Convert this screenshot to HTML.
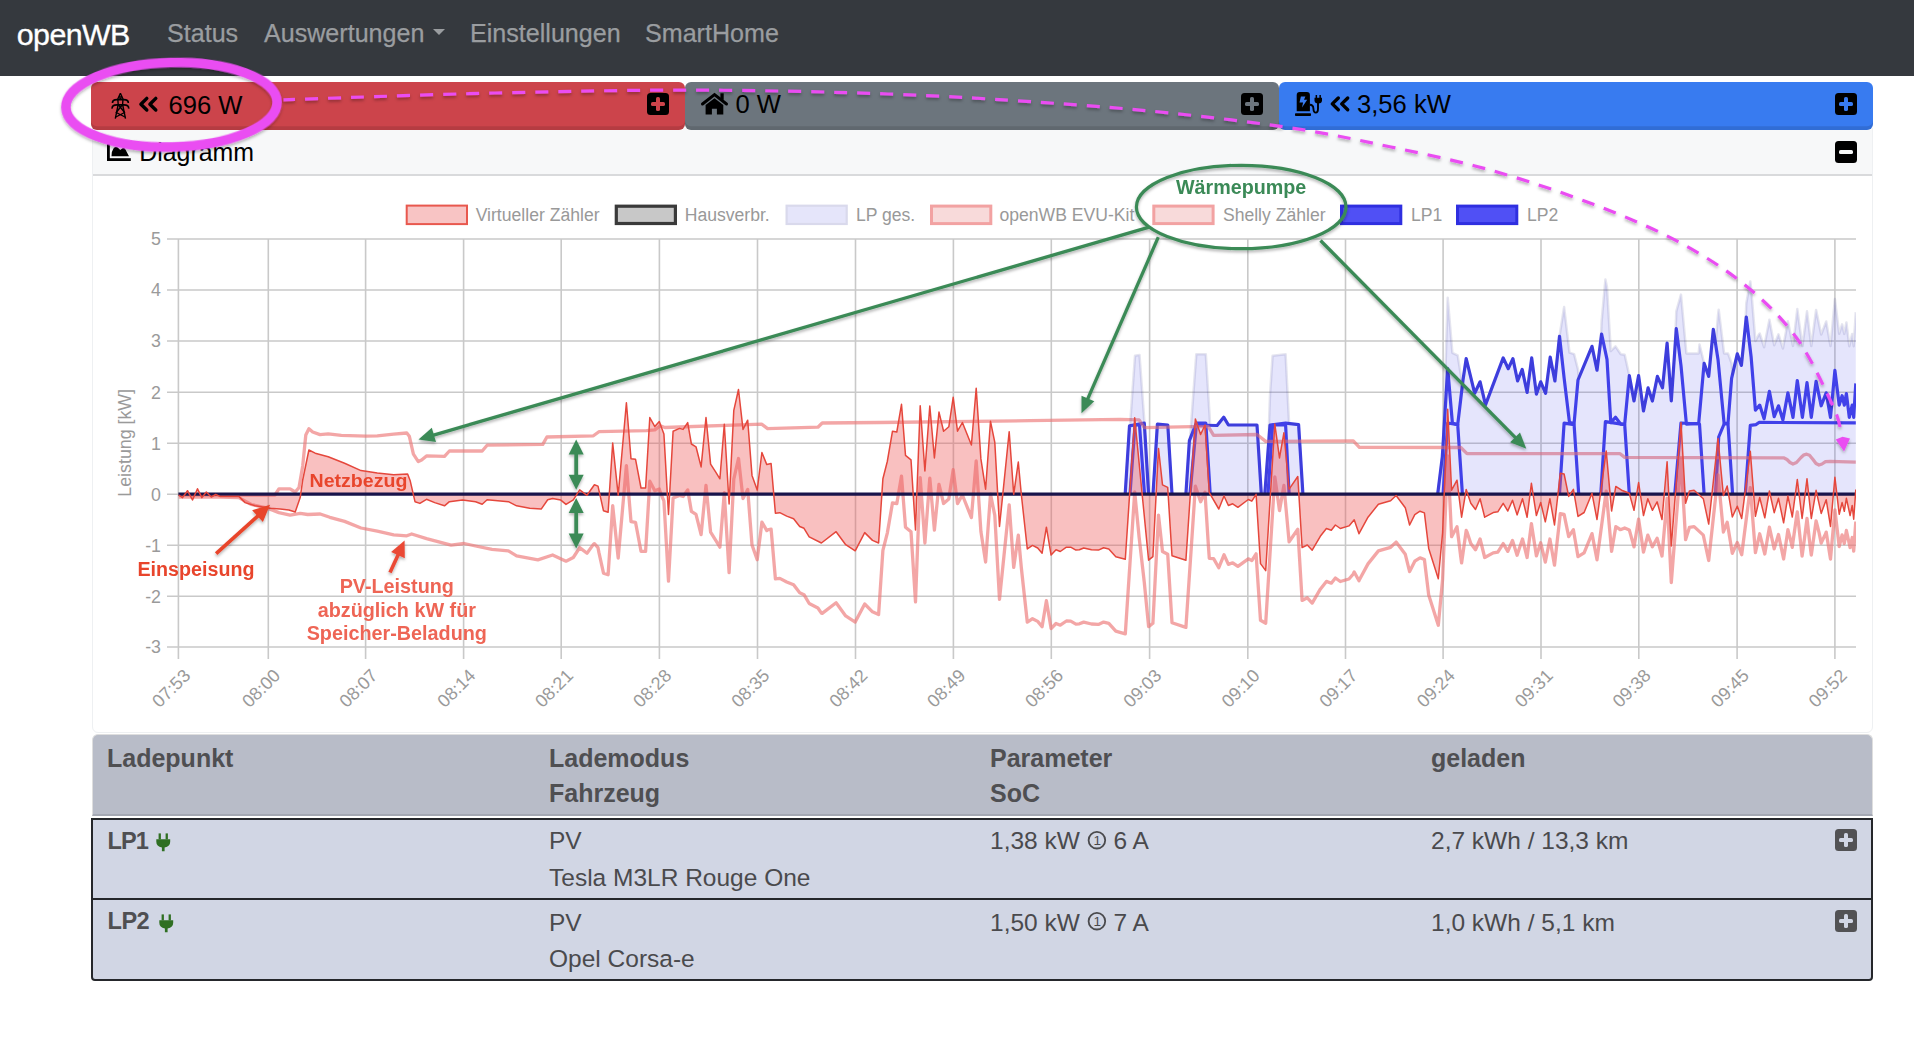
<!DOCTYPE html>
<html><head><meta charset="utf-8">
<style>
*{box-sizing:border-box;margin:0;padding:0}
html,body{width:1914px;height:1038px;overflow:hidden;background:#fff;font-family:"Liberation Sans",sans-serif;position:relative}
.a{position:absolute;white-space:pre;line-height:1}
#nav{position:absolute;left:0;top:0;width:1914px;height:76px;background:#35393e}
.brand{color:#fff;font-size:30.4px;letter-spacing:-0.6px;-webkit-text-stroke:0.35px #fff}
.nl{color:#9a9da0;font-size:25.1px;-webkit-text-stroke:0.25px #9a9da0}
.card{position:absolute;top:82px;height:48px;border-radius:6px;box-shadow:inset 0 -3.8px 0 rgba(0,0,0,.11)}
.ctext{font-size:25.3px;color:#000}
.pbox{position:absolute;width:22px;height:22px;background:#000;border-radius:3.5px}
.pbox:before{content:"";position:absolute;left:4.2px;top:9.35px;width:13.6px;height:3.3px;border-radius:1.6px;background:var(--c)}
.pbox.plus:after{content:"";position:absolute;left:9.35px;top:4.2px;width:3.3px;height:13.6px;border-radius:1.6px;background:var(--c)}
#dcard{position:absolute;left:91.5px;top:124px;width:1781.5px;height:609px;border:1.2px solid #eef0f2;border-radius:6px;background:#fff}
#dhead{position:absolute;left:0;top:0;width:100%;height:51px;background:#f7f8f9;border-bottom:2px solid #d9dadc;border-radius:6px 6px 0 0}
.th{font-size:25px;font-weight:bold;color:#4f4f52}
.td{font-size:24.5px;color:#4a4a4d}
</style></head><body>
<div id="nav"></div>
<div class="a brand" style="left:16.8px;top:18.9px">openWB</div>
<div class="a nl" style="left:167px;top:21px">Status</div>
<div class="a nl" style="left:264px;top:21px">Auswertungen</div>
<div class="a" style="left:433px;top:28.6px;width:0;height:0;border-left:6.4px solid transparent;border-right:6.4px solid transparent;border-top:6.8px solid #9a9da0"></div>
<div class="a nl" style="left:470px;top:21px">Einstellungen</div>
<div class="a nl" style="left:645px;top:21px">SmartHome</div>

<div id="dcard"><div id="dhead"></div></div>

<div class="card" style="left:91px;width:594px;background:#cc444b"></div>
<div class="card" style="left:685px;width:594px;background:#6c757d"></div>
<div class="card" style="left:1279px;width:594px;background:#387bf0"></div>
<div class="pbox plus" style="left:647px;top:93px;--c:#cc444b"></div>
<div class="pbox plus" style="left:1241px;top:93px;--c:#6c757d"></div>
<div class="pbox plus" style="left:1835px;top:93px;--c:#387bf0"></div>
<div class="pbox" style="left:1835px;top:141px;--c:#f7f8f9"></div>

<div class="a ctext" style="left:168.5px;top:92.6px;font-size:25.6px">696 W</div>
<div class="a ctext" style="left:735.5px;top:92.2px;font-size:25.6px">0 W</div>
<div class="a ctext" style="left:1357px;top:92.2px;font-size:25.6px">3,56 kW</div>
<div class="a" style="left:139.2px;top:140.1px;font-size:24.9px;color:#000">Diagramm</div>

<!-- table -->
<div class="a" style="left:91.5px;top:734.2px;width:1781.5px;height:81.8px;background:#b8bcc8;border:1.6px solid #dedede;border-bottom:2px solid #a5a9b4;border-radius:6px 6px 0 0"></div>
<div class="a" style="left:91px;top:818px;width:1782px;height:163px;background:#d1d6e4;border:2px solid #25272b;border-radius:0 0 4px 4px"></div>
<div class="a" style="left:93px;top:898px;width:1778px;height:2px;background:#25272b"></div>
<div class="a th" style="left:107px;top:745.6px">Ladepunkt</div>
<div class="a th" style="left:549px;top:745.6px">Lademodus</div>
<div class="a th" style="left:549px;top:780.6px">Fahrzeug</div>
<div class="a th" style="left:990px;top:745.6px">Parameter</div>
<div class="a th" style="left:990px;top:780.6px">SoC</div>
<div class="a th" style="left:1431px;top:745.6px">geladen</div>
<div class="a th" style="left:107.6px;top:830.1px;font-size:23.6px;letter-spacing:-1px">LP1</div>
<div class="a th" style="left:107.6px;top:910.4px;font-size:23.6px;letter-spacing:-0.6px">LP2</div>
<div class="a td" style="left:549px;top:829.1px">PV</div>
<div class="a td" style="left:549px;top:865.8px">Tesla M3LR Rouge One</div>
<div class="a td" style="left:549px;top:910.5px">PV</div>
<div class="a td" style="left:549px;top:946.6px">Opel Corsa-e</div>
<div class="a td" style="left:990px;top:829.1px">1,38 kW <span style="display:inline-block;width:20px"></span> 6 A</div>
<div class="a td" style="left:990px;top:910.5px">1,50 kW <span style="display:inline-block;width:20px"></span> 7 A</div>
<div class="a td" style="left:1431px;top:829.1px">2,7 kWh / 13,3 km</div>
<div class="a td" style="left:1431px;top:910.5px">1,0 kWh / 5,1 km</div>
<div class="pbox plus" style="left:1835px;top:829px;--c:#d1d6e4;background:#525254"></div>
<div class="pbox plus" style="left:1835px;top:910px;--c:#d1d6e4;background:#525254"></div>


<svg class="a" style="left:0;top:0" width="1914" height="1038" viewBox="0 0 1914 1038">
<g fill="none" stroke="#000" stroke-width="1.4" stroke-linejoin="round">
<path d="M120.4,93.2 L117.8,99 L118.2,104.5 L115.3,118.6 M120.4,93.2 L123,99 L122.6,104.5 L125.5,118.6 M118.4,97 H122.4"/>
<path d="M112.5,103 C112.4,100.6 113.8,99.8 117,99.7 H123.8 C127,99.8 128.4,100.6 128.3,103" stroke-width="1.7"/>
<path d="M112.1,108.6 C112,106 113.6,105 117,104.9 H123.8 C127.2,105 128.8,106 128.7,108.6" stroke-width="1.7"/>
<path d="M118.2,104.5 L124.6,112.5 L115.8,117 M122.6,104.5 L116.2,112.5 L125,117 M119.3,98.5 L121.6,98.5"/>
</g>
<g fill="none" stroke="#000" stroke-width="3.4" stroke-linecap="round" stroke-linejoin="round">
<path d="M146.8,98.4 L140.9,104.3 L146.8,110 M155.8,98.4 L149.9,104.3 L155.8,110"/>
<path d="M1338.3,98 L1332.3,103.9 L1338.3,109.8 M1347.7,98 L1341.7,103.9 L1347.7,109.8"/>
</g>
<path d="M702.5,104 L714.5,94.6 L726.5,104" fill="none" stroke="#000" stroke-width="3" stroke-linecap="round" stroke-linejoin="miter"/>
<rect x="720.4" y="93.3" width="3.3" height="6.5" fill="#000"/>
<path d="M705.6,105 L714.5,98.2 L723.3,105 V114.4 H716.9 V108.8 H711.9 V114.4 H705.6 Z" fill="#000"/>
<path d="M1296.7,95.1 Q1296.7,92.1 1299.7,92.1 H1306.9 Q1309.9,92.1 1309.9,95.1 V111.2 H1296.7 Z" fill="#000"/>
<path d="M1300.9,96.6 H1305.4 L1304,99.8 H1307.2 L1302,107.4 L1303.1,102.6 H1299.5 Z" fill="#387bf0"/>
<rect x="1295" y="113.2" width="16" height="2.8" rx="0.8" fill="#000"/>
<path d="M1309.9,104.8 Q1313.2,104.8 1313.4,108.5 Q1313.6,112.6 1315.8,112.6 Q1318,112.6 1318,108.5 V102" fill="none" stroke="#000" stroke-width="1.9"/>
<path d="M1314.5,97.8 H1322 V100.2 Q1322,103.4 1318.3,103.4 Q1314.5,103.4 1314.5,100.2 Z" fill="#000"/>
<rect x="1315.6" y="95" width="1.5" height="3.5" fill="#000"/><rect x="1319.4" y="95" width="1.5" height="3.5" fill="#000"/>
<rect x="107" y="144" width="2.8" height="17" fill="#000"/><rect x="107" y="158.2" width="23.8" height="2.8" fill="#000"/>
<path d="M111.5,156.2 Q111.5,151 113.5,148.5 Q115.4,145.8 117.4,147.2 L120.3,150.1 L122.8,148.1 Q124.3,147.4 125.3,149.2 L129,156.2 Z" fill="#000"/>
<g fill="#2f6f22">
<path d="M156.3,839.2 H170.2 V841.8 Q170.2,846.6 164.6,847.4 V851.3 H161.9 V847.4 Q156.3,846.6 156.3,841.8 Z"/>
<rect x="158.6" y="833.4" width="2.3" height="6"/><rect x="165.6" y="833.4" width="2.3" height="6"/>
<path d="M159.3,920.2 H173.2 V922.8 Q173.2,927.6 167.6,928.4 V932.3 H164.9 V928.4 Q159.3,927.6 159.3,922.8 Z"/>
<rect x="161.6" y="914.4" width="2.3" height="6"/><rect x="168.6" y="914.4" width="2.3" height="6"/>
</g>
<g fill="none" stroke="#4a4a4d" stroke-width="1.8"><circle cx="1096.9" cy="840.2" r="8.3"/><circle cx="1096.9" cy="921.2" r="8.3"/></g>
<g fill="#4a4a4d" font-size="13.5"><text x="1097.2" y="845.1" text-anchor="middle">1</text><text x="1097.2" y="926.1" text-anchor="middle">1</text></g>
</svg>
<svg class="a" style="left:0;top:0" width="1914" height="1038" viewBox="0 0 1914 1038">
<defs><clipPath id="pc"><rect x="178" y="200" width="1678" height="460"/></clipPath><filter id="sh" x="-10%" y="-10%" width="120%" height="130%"><feDropShadow dx="0" dy="2" stdDeviation="1.6" flood-color="#000" flood-opacity="0.35"/></filter></defs>
<path d="M167,239 H1856 M167,290 H1856 M167,341 H1856 M167,392.2 H1856 M167,443.3 H1856 M167,494.2 H1856 M167,545.3 H1856 M167,596.3 H1856 M167,647 H1856 M178.4,239 V659 M268.3,239 V659 M365.6,239 V659 M463.6,239 V659 M561.2,239 V659 M659.4,239 V659 M757.5,239 V659 M855.5,239 V659 M953.4,239 V659 M1051.3,239 V659 M1149.6,239 V659 M1247.8,239 V659 M1345.5,239 V659 M1443.1,239 V659 M1541,239 V659 M1638.8,239 V659 M1737.1,239 V659 M1834.9,239 V659" stroke="#c9c9c9" stroke-width="1.6" fill="none"/>
<text x="161" y="245.4" text-anchor="end" font-size="17.8" fill="#9a9a9a">5</text>
<text x="161" y="296.4" text-anchor="end" font-size="17.8" fill="#9a9a9a">4</text>
<text x="161" y="347.4" text-anchor="end" font-size="17.8" fill="#9a9a9a">3</text>
<text x="161" y="398.6" text-anchor="end" font-size="17.8" fill="#9a9a9a">2</text>
<text x="161" y="449.7" text-anchor="end" font-size="17.8" fill="#9a9a9a">1</text>
<text x="161" y="500.6" text-anchor="end" font-size="17.8" fill="#9a9a9a">0</text>
<text x="161" y="551.7" text-anchor="end" font-size="17.8" fill="#9a9a9a">-1</text>
<text x="161" y="602.7" text-anchor="end" font-size="17.8" fill="#9a9a9a">-2</text>
<text x="161" y="653.4" text-anchor="end" font-size="17.8" fill="#9a9a9a">-3</text>
<text transform="translate(187,672.3) rotate(-45)" x="0" y="6.3" text-anchor="end" font-size="18" fill="#9a9a9a">07:53</text>
<text transform="translate(276.9,672.3) rotate(-45)" x="0" y="6.3" text-anchor="end" font-size="18" fill="#9a9a9a">08:00</text>
<text transform="translate(374.2,672.3) rotate(-45)" x="0" y="6.3" text-anchor="end" font-size="18" fill="#9a9a9a">08:07</text>
<text transform="translate(472.2,672.3) rotate(-45)" x="0" y="6.3" text-anchor="end" font-size="18" fill="#9a9a9a">08:14</text>
<text transform="translate(569.8,672.3) rotate(-45)" x="0" y="6.3" text-anchor="end" font-size="18" fill="#9a9a9a">08:21</text>
<text transform="translate(668,672.3) rotate(-45)" x="0" y="6.3" text-anchor="end" font-size="18" fill="#9a9a9a">08:28</text>
<text transform="translate(766.1,672.3) rotate(-45)" x="0" y="6.3" text-anchor="end" font-size="18" fill="#9a9a9a">08:35</text>
<text transform="translate(864.1,672.3) rotate(-45)" x="0" y="6.3" text-anchor="end" font-size="18" fill="#9a9a9a">08:42</text>
<text transform="translate(962,672.3) rotate(-45)" x="0" y="6.3" text-anchor="end" font-size="18" fill="#9a9a9a">08:49</text>
<text transform="translate(1059.9,672.3) rotate(-45)" x="0" y="6.3" text-anchor="end" font-size="18" fill="#9a9a9a">08:56</text>
<text transform="translate(1158.2,672.3) rotate(-45)" x="0" y="6.3" text-anchor="end" font-size="18" fill="#9a9a9a">09:03</text>
<text transform="translate(1256.4,672.3) rotate(-45)" x="0" y="6.3" text-anchor="end" font-size="18" fill="#9a9a9a">09:10</text>
<text transform="translate(1354.1,672.3) rotate(-45)" x="0" y="6.3" text-anchor="end" font-size="18" fill="#9a9a9a">09:17</text>
<text transform="translate(1451.7,672.3) rotate(-45)" x="0" y="6.3" text-anchor="end" font-size="18" fill="#9a9a9a">09:24</text>
<text transform="translate(1549.6,672.3) rotate(-45)" x="0" y="6.3" text-anchor="end" font-size="18" fill="#9a9a9a">09:31</text>
<text transform="translate(1647.4,672.3) rotate(-45)" x="0" y="6.3" text-anchor="end" font-size="18" fill="#9a9a9a">09:38</text>
<text transform="translate(1745.7,672.3) rotate(-45)" x="0" y="6.3" text-anchor="end" font-size="18" fill="#9a9a9a">09:45</text>
<text transform="translate(1843.5,672.3) rotate(-45)" x="0" y="6.3" text-anchor="end" font-size="18" fill="#9a9a9a">09:52</text>
<text transform="translate(131,442.8) rotate(-90)" x="0" y="0" text-anchor="middle" font-size="17.8" fill="#9a9a9a">Leistung [kW]</text>
<g clip-path="url(#pc)">
<polyline points="1130,494 1135,425 1139.5,425 1144.5,494" fill="none" stroke="#4141e9" stroke-width="3.2" stroke-linejoin="round"/>
<polyline points="1190,494 1196.3,425 1217.1,425.5 1223.7,417.2 1228.4,425 1257,425 1261.3,494" fill="none" stroke="#4141e9" stroke-width="3.2" stroke-linejoin="round"/>
<polyline points="1268,494 1272.6,425 1285.6,425 1289.1,494" fill="none" stroke="#4141e9" stroke-width="3.2" stroke-linejoin="round"/>
<polyline points="1443.1,494 1447.7,423 1457.7,424.7 1462.4,494" fill="none" stroke="#4141e9" stroke-width="3.2" stroke-linejoin="round"/>
<polyline points="1559.5,494 1564.1,423.2 1574.1,424.7 1578.7,494" fill="none" stroke="#4141e9" stroke-width="3.2" stroke-linejoin="round"/>
<polyline points="1600.8,494 1605.4,421.6 1624.7,424.7 1629.3,494" fill="none" stroke="#4141e9" stroke-width="3.2" stroke-linejoin="round"/>
<polyline points="1674.8,494 1681,423 1699.5,424 1704.1,494" fill="none" stroke="#4141e9" stroke-width="3.2" stroke-linejoin="round"/>
<polyline points="1715.6,494 1718.7,437 1724.1,424 1728,424 1732.6,494" fill="none" stroke="#4141e9" stroke-width="3.2" stroke-linejoin="round"/>
<polyline points="1745.3,494 1750.3,425.3 1756.1,424.6 1759,422.4 1855.8,422.8" fill="none" stroke="#4141e9" stroke-width="3.2" stroke-linejoin="round"/>
<polyline points="1125.2,494 1129.5,425.8 1144.3,423.2 1148.6,494" fill="none" stroke="#4141e9" stroke-width="3.2" stroke-linejoin="round"/>
<polyline points="1153,494 1157.4,424.1 1167.8,425 1172,494" fill="none" stroke="#4141e9" stroke-width="3.2" stroke-linejoin="round"/>
<polyline points="1185.9,494 1189.4,440.6 1196.3,423.2 1205.8,423 1210.2,494" fill="none" stroke="#4141e9" stroke-width="3.2" stroke-linejoin="round"/>
<polyline points="1264.8,494 1270,425 1285.6,423.2 1298.6,424.6 1302.9,494" fill="none" stroke="#4141e9" stroke-width="3.2" stroke-linejoin="round"/>
<polyline points="1437.7,494 1442.3,457 1447.7,368.7 1452.4,423 1457.7,424.7 1463,380 1466.2,358.6 1474.7,393.3 1480.1,381.8 1485.5,404.9 1503.2,357.9 1508.3,368.7 1512.9,358.6 1517.6,381 1522.2,369.4 1527.1,392.5 1531.7,357.9 1536.4,394.1 1540.7,381.8 1545.6,393.3 1550.2,357.1 1554.9,381 1559.5,336.3 1564.1,377.9 1569.5,422.6 1574.1,423.4 1578,380 1592,346.3 1597,370.2 1601.6,334 1607,359.4 1610.8,422.6 1615.5,417.2 1620.8,424.1 1624.7,424.1 1629.3,375.6 1634,401 1638.6,375.6 1643.5,411 1648.1,387.9 1652.4,401 1657.4,376.4 1662.5,387.9 1667.1,343.2 1671.3,401 1676.3,328.6 1681,365.6 1686.4,424.1 1698.7,423.4 1704.1,363.3 1708.7,376.4 1713.3,329.3 1718,359.4 1724.1,423.4 1728,423.4 1731.6,378.4 1737.3,353.8 1741.4,365.4 1746.3,317 1751.1,356.7 1755.4,410.2 1759.7,405.1 1764.1,418.8 1769.4,391.4 1774.2,416.7 1778.5,405.8 1782.9,420 1787.9,392.8 1793,417.4 1797.3,380.5 1802.4,417.4 1807,382.7 1811.3,417.4 1816.1,381.3 1821.2,405.8 1826.2,392.8 1830.5,417.4 1834.9,370.4 1839.2,405.1 1842.1,395.7 1844.3,405.1 1846.4,393.6 1849.3,417.4 1852.2,405.1 1853.7,417.4 1855.8,383.4" fill="none" stroke="#4141e9" stroke-width="3.2" stroke-linejoin="round"/>
<polyline points="178.7,495 275,495 278.9,488.8 290.1,488.8 295.2,492 299,487.6 302.7,466 305.8,435 308.9,428.8 312.7,432 320,434.6 328.2,433.8 341.3,435.4 365.9,436.2 377.3,435.9 393.7,434.2 406.8,433 409.3,436.2 413.4,454.2 418.3,461.6 421.6,460 426.5,455.9 444.5,456.4 449.4,451 482.2,451 487.1,445.2 542.8,444.4 546.9,437 593.4,435.8 598.9,431.7 646.5,430.6 654.8,429.9 660.3,425.7 664.8,427.5 761.6,424.2 767.6,428.6 817.9,427.2 822.2,423 880,422.5 1030,420.7 1120,419.4 1139.1,419.8 1144.3,427.6 1192.8,426.7 1208.4,426.7 1213.6,435.4 1257,434.5 1265.7,441.4 1353.3,440.9 1359.4,447.3 1460.8,447.5 1467,453.7 1620.1,453.7 1624.7,457.4 1783.6,457.8 1787,459.5 1790,462.5 1793,464 1796.5,462.5 1801,457.5 1804,454.8 1806.7,454.2 1809.5,455.2 1813,459.5 1816,463.5 1819,465 1822,464 1825.5,461.6 1830,461.4 1855.8,462.1" fill="none" stroke="rgba(236,115,115,0.64)" stroke-width="3.3" stroke-linejoin="round"/>
<polyline points="178.7,497 220,497 238.8,497.6 251.3,504.5 267.6,508.2 278.9,512.6 290.1,515.1 300.2,513.3 307.7,514.5 320.2,514 329.8,517.3 344.6,521.4 361,528 377.3,531.2 393.7,534.8 406.8,535.8 411.7,534 426.5,538.6 451.1,545.2 464.2,543.5 475.6,546 492,549.3 508.4,550.9 516.6,555.8 537.9,559.9 552.6,555 566,561.2 573.3,557.5 579.7,547.6 587,553.3 593.4,544.4 594.4,543.7 598,547.7 598.9,552.4 603.5,573.2 608.1,574.8 612.7,505.7 618.2,558 626.4,465.7 631,521.7 635.5,522.3 641,551.3 645.6,551.4 646.5,536.3 649.8,481.2 654.8,490.7 659.3,489 660.3,492.5 663.9,500.8 664.8,516.2 668.5,581.1 673.1,498 679.5,495.4 683.1,496.5 687.7,489.9 691.4,511.4 696,514.4 701.1,534.6 706,485.4 710.6,532.2 715.6,540.1 719.9,547.2 724.3,492.7 729.1,572.7 733.8,479.2 738.5,458.5 743,498.6 747.7,489.5 752,544.9 757.2,559.8 761.6,524.7 761.9,522.1 766.8,530.6 767.6,529.8 771.1,529.1 775.4,578.8 779.8,578.4 786.7,582 793.6,584.8 799.7,592.8 804,594.7 809.2,603.5 817.9,608 821.4,613.2 822.2,613.4 836.1,602.8 845.7,615.9 855.2,622.1 864.7,604 872.5,611.8 878.6,614.5 880,593.6 882.9,550.3 887.3,533.1 892.5,502.8 896.8,503.7 901.5,476.1 905.5,527.2 911,531.7 915.5,601.9 920.2,477.7 924.9,543 929.8,478.1 934.4,530.2 939,484.3 943.6,503.5 948.8,499.1 953.2,469.7 957.5,503.6 962.4,495 971.4,517.6 976.2,461 980.9,531.6 985.6,562 990.5,494.1 994.8,515.3 999.5,599.4 1009.2,504.8 1013.7,567.4 1018.3,535.2 1021.3,567.5 1027.3,622.2 1030,620.4 1032.5,618.7 1037.7,621.4 1042.1,626.7 1046.4,600.7 1051.1,628.6 1056,623.5 1060.3,625.2 1066.4,621 1070.7,621.1 1075.9,624.1 1079.4,623.8 1083.7,622.1 1091.5,624 1098.4,624.4 1103.6,622.1 1108.8,623.3 1115.8,631.2 1120,632.4 1125.3,633.8 1134.7,492 1139.1,537 1144.3,582.5 1148.6,626.7 1152.9,623.3 1158.5,515.1 1162.5,551.5 1167.7,554.2 1172,622.7 1185.9,627.4 1192.8,524.9 1195.4,486.2 1200.6,501.8 1205,492.3 1208.4,545.8 1209.3,558.4 1213.6,558.6 1218.8,567.7 1224,554.8 1228.4,564.4 1232.7,562.8 1237.9,566.4 1248.3,558.8 1251.8,560.6 1256.1,553.8 1257,568 1260.5,620.3 1265.7,623.2 1274.8,476.8 1279.5,510.6 1283.9,485.5 1289.1,541.8 1297.8,529.3 1302.1,600.4 1307.3,597.8 1312.2,603.1 1320.3,589.2 1326.4,581.4 1331.3,583.2 1335.4,578 1340.3,581.5 1349,579 1353.3,574 1354.2,572 1359,580.8 1359.4,579.7 1368,563.9 1378.4,550.9 1390.6,547.3 1396.1,542.1 1405.3,554.3 1409.6,571.6 1414.8,561.2 1420,557.8 1424.4,559.5 1428.7,595 1438.3,625.3 1442.6,579.3 1447.7,455.8 1451.6,536.7 1457,526.7 1460.8,557.3 1461.6,562.9 1466.2,530.5 1467,532.1 1470.8,543.6 1475.5,549.8 1480.1,539 1484.7,557.5 1493.2,552.9 1497.8,552.1 1503.2,543.6 1507.8,551.3 1512.5,540.5 1517.1,555.2 1522.5,539 1527.1,557.5 1531.4,523.6 1536.4,555.9 1540.7,542.8 1545.3,562.1 1549.9,539 1554.5,565.2 1560.3,513.6 1564.1,514.3 1568.7,536.7 1573.4,529.7 1578,556.7 1584.1,552.8 1592,533.6 1597,559.8 1606.2,491.2 1611.6,551.3 1615.8,526.7 1620.1,529.5 1621.6,529.3 1624.7,528 1629.3,529.9 1634,546.9 1638.6,519.1 1643.5,552.2 1647.8,535.2 1652.4,546.8 1657.1,538.3 1662,556 1667.1,498.2 1671.3,582.5 1681,458.9 1685.6,539.7 1689.4,527.4 1694.1,526.6 1703.3,535.1 1708.7,560.5 1718,475 1723.4,532 1727.2,522.3 1732.3,553.3 1737.3,542.5 1741.7,554.8 1750.3,487.6 1755.4,552.6 1759.7,533.8 1764.8,554 1769.4,527.2 1774.2,548.9 1778.5,534.5 1783.6,559 1787,536.2 1787.9,529.7 1790,537.6 1792.3,547.4 1793,541.7 1796.5,517 1797.3,511.9 1801,546.1 1802.1,556 1804,542.3 1806.7,521 1807,518.5 1809.5,540.7 1811.3,555.1 1813,543 1816,521.4 1816.1,520.8 1819,532.4 1821.2,543.1 1822,541.2 1825.5,534 1826.2,532.1 1830,555.9 1830.5,559 1834.9,509.8 1839.2,546.6 1842.1,534.9 1844.3,543.5 1846.4,530.5 1850.1,547.7 1852.2,537.5 1853.7,551.2 1855.8,521.5" fill="none" stroke="rgba(236,115,115,0.64)" stroke-width="3.3" stroke-linejoin="round"/>
<polygon points="1125.2,494 1125.2,494 1129.5,425.8 1130,425.7 1135,355.8 1139.5,355 1144.3,420.4 1144.5,426.5 1148.6,494 1153,494 1157.4,424.1 1167.8,425 1172,494 1185.9,494 1189.4,440.6 1190,439.1 1196.3,354.2 1205.8,354.2 1210.2,425.3 1217.1,425.5 1223.7,417.2 1228.4,425 1257,425 1261.3,494 1264.8,494 1268,451.5 1270,395 1272.6,355.7 1285.6,354.2 1289.1,423.6 1298.6,424.6 1302.9,494 1302.9,494" fill="rgba(70,70,235,0.14)" stroke="none"/>
<polyline points="1125.2,494 1129.5,425.8 1130,425.7 1135,355.8 1139.5,355 1144.3,420.4 1144.5,426.5 1148.6,494 1153,494 1157.4,424.1 1167.8,425 1172,494 1185.9,494 1189.4,440.6 1190,439.1 1196.3,354.2 1205.8,354.2 1210.2,425.3 1217.1,425.5 1223.7,417.2 1228.4,425 1257,425 1261.3,494 1264.8,494 1268,451.5 1270,395 1272.6,355.7 1285.6,354.2 1289.1,423.6 1298.6,424.6 1302.9,494" fill="none" stroke="rgba(40,40,120,0.12)" stroke-width="2.5" stroke-linejoin="round"/>
<polygon points="1437.7,494 1437.7,494 1442.3,457 1443.1,443.9 1447.7,297.7 1452.4,352.8 1457.7,355.4 1462.4,385.1 1463,380 1466.2,358.6 1474.7,393.3 1480.1,381.8 1485.5,404.9 1503.2,357.9 1508.3,368.7 1512.9,358.6 1517.6,381 1522.2,369.4 1527.1,392.5 1531.7,357.9 1536.4,394.1 1540.7,381.8 1545.6,393.3 1550.2,357.1 1554.9,381 1559.5,336.3 1564.1,307.1 1569.5,352.6 1574.1,354.1 1578,369.5 1578.7,378.3 1592,346.3 1597,370.2 1600.8,340.3 1601.6,321.4 1605.4,279.5 1607,287.3 1610.8,351.1 1615.5,346.4 1620.8,354.2 1624.7,354.8 1629.3,375.6 1634,401 1638.6,375.6 1643.5,411 1648.1,387.9 1652.4,401 1657.4,376.4 1662.5,387.9 1667.1,343.2 1671.3,401 1674.8,350.3 1676.3,311.4 1681,294.6 1686.4,353.4 1698.7,353.4 1699.5,344.5 1704.1,363.3 1708.7,376.4 1713.3,329.3 1715.6,344 1718,315.3 1718.7,309.7 1724.1,353.4 1728,353.4 1731.6,363.2 1732.6,374.1 1737.3,353.8 1741.4,365.4 1745.3,326.9 1746.3,303.3 1750.3,281.4 1751.1,287.9 1755.4,340.9 1756.1,340 1759,334.3 1759.7,333.5 1764.1,347.2 1769.4,319.8 1774.2,345.2 1778.5,334.3 1782.9,348.5 1787.9,321.3 1793,345.9 1797.3,309.1 1802.4,346 1807,311.3 1811.3,346 1816.1,309.9 1821.2,334.5 1826.2,321.5 1830.5,346.1 1834.9,299.1 1839.2,333.8 1842.1,324.4 1844.3,333.9 1846.4,322.4 1849.3,346.2 1852.2,333.9 1853.7,346.2 1855.8,312.2 1855.8,494" fill="rgba(70,70,235,0.14)" stroke="none"/>
<polyline points="1437.7,494 1442.3,457 1443.1,443.9 1447.7,297.7 1452.4,352.8 1457.7,355.4 1462.4,385.1 1463,380 1466.2,358.6 1474.7,393.3 1480.1,381.8 1485.5,404.9 1503.2,357.9 1508.3,368.7 1512.9,358.6 1517.6,381 1522.2,369.4 1527.1,392.5 1531.7,357.9 1536.4,394.1 1540.7,381.8 1545.6,393.3 1550.2,357.1 1554.9,381 1559.5,336.3 1564.1,307.1 1569.5,352.6 1574.1,354.1 1578,369.5 1578.7,378.3 1592,346.3 1597,370.2 1600.8,340.3 1601.6,321.4 1605.4,279.5 1607,287.3 1610.8,351.1 1615.5,346.4 1620.8,354.2 1624.7,354.8 1629.3,375.6 1634,401 1638.6,375.6 1643.5,411 1648.1,387.9 1652.4,401 1657.4,376.4 1662.5,387.9 1667.1,343.2 1671.3,401 1674.8,350.3 1676.3,311.4 1681,294.6 1686.4,353.4 1698.7,353.4 1699.5,344.5 1704.1,363.3 1708.7,376.4 1713.3,329.3 1715.6,344 1718,315.3 1718.7,309.7 1724.1,353.4 1728,353.4 1731.6,363.2 1732.6,374.1 1737.3,353.8 1741.4,365.4 1745.3,326.9 1746.3,303.3 1750.3,281.4 1751.1,287.9 1755.4,340.9 1756.1,340 1759,334.3 1759.7,333.5 1764.1,347.2 1769.4,319.8 1774.2,345.2 1778.5,334.3 1782.9,348.5 1787.9,321.3 1793,345.9 1797.3,309.1 1802.4,346 1807,311.3 1811.3,346 1816.1,309.9 1821.2,334.5 1826.2,321.5 1830.5,346.1 1834.9,299.1 1839.2,333.8 1842.1,324.4 1844.3,333.9 1846.4,322.4 1849.3,346.2 1852.2,333.9 1853.7,346.2 1855.8,312.2" fill="none" stroke="rgba(40,40,120,0.12)" stroke-width="2.5" stroke-linejoin="round"/>
<polygon points="178.7,494 178.7,495 182.5,497.6 187.5,490.7 192.5,500 197.5,488.8 201.9,497.6 206.3,492 211.3,497 215.7,494.5 220,496.4 238.8,496.4 245.1,502.6 255.1,505.7 270.1,508.2 280.1,508.9 288.9,510 295.2,512 300.2,497.6 302.7,480 308.9,450 315.2,453.2 328.2,456.7 344.6,463.2 361,470.6 377.3,473.1 393.7,474.7 407.6,473.9 410.1,480.4 415,501.7 419.9,503.4 426.5,499.3 434.7,502.6 444.5,505.8 449.4,501.7 462.5,500.1 475.6,501.7 482.2,504.2 487.1,499.8 508.4,501.7 516.6,505.8 529.7,508.3 541.2,509.1 547.7,499.8 552.6,498.5 560.8,500.1 566,504.4 573.3,499.8 579.7,489.8 587,495.3 594.4,484.8 598,486.1 603.5,510.8 608.1,512.3 612.7,443.1 618.2,495.3 626.4,402.8 631,458.7 635.5,459.2 641,488 645.6,488 649.8,417.5 654.8,426.6 659.3,421.5 663.9,433.9 668.5,514.5 673.1,431.2 679.5,428.4 683.1,429.4 687.7,422.6 691.4,444 696,446.8 701.1,466.9 706,417.5 710.6,464.1 715.6,471.9 719.9,478.8 724.3,424.2 729.1,504 733.8,410.3 738.5,389.5 743,429.4 747.7,420.2 752,475.4 757.2,490.1 761.9,452.5 766.8,464.6 771.1,463.6 775.4,513.2 779.8,512.7 786.7,516.1 793.6,518.7 799.7,526.5 804,528.3 809.2,536.9 821.4,543 836.1,531.7 845.7,544.7 855.2,550.8 864.7,532.6 872.5,540.4 878.6,543 882.9,478.8 887.3,461.5 892.5,431.2 896.8,432 901.5,404.3 905.5,455.4 911,459.8 915.5,530 920.2,405.7 924.9,471 929.8,406 934.4,458 939,412.1 943.6,431.2 948.8,426.8 953.2,397.3 957.5,431.2 962.4,422.5 971.4,445 976.2,388.3 980.9,458.9 985.6,489.2 990.5,421.3 994.8,442.4 999.5,526.5 1009.2,431.7 1013.7,494.3 1018.3,462 1021.3,494.3 1027.3,548.9 1032.5,545.4 1037.7,548 1042.1,553.2 1046.4,527.2 1051.1,555 1056,549.8 1060.3,551.5 1066.4,547.2 1070.7,547.2 1075.9,550.1 1079.4,549.8 1083.7,548 1091.5,549.8 1098.4,550.1 1103.6,547.7 1108.8,548.9 1115.8,556.7 1125.3,559.3 1134.7,417.7 1148.6,560.2 1152.9,556.7 1158.5,448.4 1162.5,484.8 1167.7,487.4 1172,555.8 1185.9,560.2 1195.4,418.9 1200.6,434.5 1205,425 1209.3,492.6 1218.8,509 1224,496 1228.4,505.5 1232.7,503.8 1237.9,507.3 1248.3,499.5 1251.8,501.2 1256.1,494.3 1260.5,563.6 1265.7,570.6 1274.8,424.1 1279.5,457.9 1283.9,432.8 1289.1,489.1 1297.8,476.5 1302.1,547.6 1307.3,545 1312.2,550.2 1320.3,536.3 1326.4,528.5 1331.3,530.2 1335.4,525 1340.3,528.5 1349,525.9 1354.2,519.8 1359,533.7 1368,517.2 1378.4,504.2 1390.6,500.7 1396.1,495.5 1405.3,507.7 1409.6,525 1414.8,514.6 1420,511.2 1424.4,512.9 1428.7,548.4 1438.3,578.8 1442.6,532.8 1447.7,409.3 1451.6,490.2 1457,480.2 1461.6,517.2 1466.2,489.4 1470.8,503.3 1475.5,509.5 1480.1,498.7 1484.7,517.2 1493.2,512.6 1497.8,511.8 1503.2,503.3 1507.8,511 1512.5,500.2 1517.1,514.9 1522.5,498.7 1527.1,517.2 1531.4,483.3 1536.4,515.6 1540.7,502.5 1545.3,521.8 1549.9,498.7 1554.5,524.9 1560.3,473.3 1564.1,474 1568.7,496.4 1573.4,489.4 1578,516.4 1584.1,512.5 1592,493.3 1597,519.5 1606.2,450.9 1611.6,511 1615.8,486.4 1621.6,490.2 1629.3,493.3 1634,510.3 1638.6,482.5 1643.5,515.6 1647.8,498.7 1652.4,510.3 1657.1,501.8 1662,519.5 1667.1,461.7 1671.3,546 1681,422.4 1685.6,503.3 1689.4,491 1694.1,490.2 1703.3,498.7 1708.7,524.1 1718,438.6 1723.4,495.6 1727.2,486 1732.3,517 1737.3,506.2 1741.7,518.5 1750.3,451.3 1755.4,516.3 1759.7,497.5 1764.8,517.8 1769.4,491 1774.2,512.7 1778.5,498.3 1783.6,522.8 1787.9,496.1 1792.3,517 1797.3,479.5 1802.1,518.5 1807,478.8 1811.3,518.5 1816.1,490.3 1821.2,513.4 1826.2,499.7 1830.5,526.4 1834.9,477.3 1839.2,514.2 1842.1,502.6 1844.3,511.3 1846.4,498.3 1850.1,515.6 1852.2,505.5 1853.7,519.2 1855.8,489.6 1855.8,494" fill="rgba(238,90,90,0.38)" stroke="none"/>
<line x1="178.4" y1="494.2" x2="1856" y2="494.2" stroke="#19144b" stroke-width="3.2"/>
<polyline points="178.7,495 182.5,497.6 187.5,490.7 192.5,500 197.5,488.8 201.9,497.6 206.3,492 211.3,497 215.7,494.5 220,496.4 238.8,496.4 245.1,502.6 255.1,505.7 270.1,508.2 280.1,508.9 288.9,510 295.2,512 300.2,497.6 302.7,480 308.9,450 315.2,453.2 328.2,456.7 344.6,463.2 361,470.6 377.3,473.1 393.7,474.7 407.6,473.9 410.1,480.4 415,501.7 419.9,503.4 426.5,499.3 434.7,502.6 444.5,505.8 449.4,501.7 462.5,500.1 475.6,501.7 482.2,504.2 487.1,499.8 508.4,501.7 516.6,505.8 529.7,508.3 541.2,509.1 547.7,499.8 552.6,498.5 560.8,500.1 566,504.4 573.3,499.8 579.7,489.8 587,495.3 594.4,484.8 598,486.1 603.5,510.8 608.1,512.3 612.7,443.1 618.2,495.3 626.4,402.8 631,458.7 635.5,459.2 641,488 645.6,488 649.8,417.5 654.8,426.6 659.3,421.5 663.9,433.9 668.5,514.5 673.1,431.2 679.5,428.4 683.1,429.4 687.7,422.6 691.4,444 696,446.8 701.1,466.9 706,417.5 710.6,464.1 715.6,471.9 719.9,478.8 724.3,424.2 729.1,504 733.8,410.3 738.5,389.5 743,429.4 747.7,420.2 752,475.4 757.2,490.1 761.9,452.5 766.8,464.6 771.1,463.6 775.4,513.2 779.8,512.7 786.7,516.1 793.6,518.7 799.7,526.5 804,528.3 809.2,536.9 821.4,543 836.1,531.7 845.7,544.7 855.2,550.8 864.7,532.6 872.5,540.4 878.6,543 882.9,478.8 887.3,461.5 892.5,431.2 896.8,432 901.5,404.3 905.5,455.4 911,459.8 915.5,530 920.2,405.7 924.9,471 929.8,406 934.4,458 939,412.1 943.6,431.2 948.8,426.8 953.2,397.3 957.5,431.2 962.4,422.5 971.4,445 976.2,388.3 980.9,458.9 985.6,489.2 990.5,421.3 994.8,442.4 999.5,526.5 1009.2,431.7 1013.7,494.3 1018.3,462 1021.3,494.3 1027.3,548.9 1032.5,545.4 1037.7,548 1042.1,553.2 1046.4,527.2 1051.1,555 1056,549.8 1060.3,551.5 1066.4,547.2 1070.7,547.2 1075.9,550.1 1079.4,549.8 1083.7,548 1091.5,549.8 1098.4,550.1 1103.6,547.7 1108.8,548.9 1115.8,556.7 1125.3,559.3 1134.7,417.7 1148.6,560.2 1152.9,556.7 1158.5,448.4 1162.5,484.8 1167.7,487.4 1172,555.8 1185.9,560.2 1195.4,418.9 1200.6,434.5 1205,425 1209.3,492.6 1218.8,509 1224,496 1228.4,505.5 1232.7,503.8 1237.9,507.3 1248.3,499.5 1251.8,501.2 1256.1,494.3 1260.5,563.6 1265.7,570.6 1274.8,424.1 1279.5,457.9 1283.9,432.8 1289.1,489.1 1297.8,476.5 1302.1,547.6 1307.3,545 1312.2,550.2 1320.3,536.3 1326.4,528.5 1331.3,530.2 1335.4,525 1340.3,528.5 1349,525.9 1354.2,519.8 1359,533.7 1368,517.2 1378.4,504.2 1390.6,500.7 1396.1,495.5 1405.3,507.7 1409.6,525 1414.8,514.6 1420,511.2 1424.4,512.9 1428.7,548.4 1438.3,578.8 1442.6,532.8 1447.7,409.3 1451.6,490.2 1457,480.2 1461.6,517.2 1466.2,489.4 1470.8,503.3 1475.5,509.5 1480.1,498.7 1484.7,517.2 1493.2,512.6 1497.8,511.8 1503.2,503.3 1507.8,511 1512.5,500.2 1517.1,514.9 1522.5,498.7 1527.1,517.2 1531.4,483.3 1536.4,515.6 1540.7,502.5 1545.3,521.8 1549.9,498.7 1554.5,524.9 1560.3,473.3 1564.1,474 1568.7,496.4 1573.4,489.4 1578,516.4 1584.1,512.5 1592,493.3 1597,519.5 1606.2,450.9 1611.6,511 1615.8,486.4 1621.6,490.2 1629.3,493.3 1634,510.3 1638.6,482.5 1643.5,515.6 1647.8,498.7 1652.4,510.3 1657.1,501.8 1662,519.5 1667.1,461.7 1671.3,546 1681,422.4 1685.6,503.3 1689.4,491 1694.1,490.2 1703.3,498.7 1708.7,524.1 1718,438.6 1723.4,495.6 1727.2,486 1732.3,517 1737.3,506.2 1741.7,518.5 1750.3,451.3 1755.4,516.3 1759.7,497.5 1764.8,517.8 1769.4,491 1774.2,512.7 1778.5,498.3 1783.6,522.8 1787.9,496.1 1792.3,517 1797.3,479.5 1802.1,518.5 1807,478.8 1811.3,518.5 1816.1,490.3 1821.2,513.4 1826.2,499.7 1830.5,526.4 1834.9,477.3 1839.2,514.2 1842.1,502.6 1844.3,511.3 1846.4,498.3 1850.1,515.6 1852.2,505.5 1853.7,519.2 1855.8,489.6" fill="none" stroke="#e5473c" stroke-width="1.5" stroke-linejoin="round"/>
</g>
<rect x="406.7" y="205.6" width="60.3" height="18.5" fill="#f8c4c4" stroke="#e8584e" stroke-width="2"/>
<text x="475.7" y="221" font-size="17.6" fill="#999">Virtueller Zähler</text>
<rect x="616.3" y="206.2" width="59.1" height="17.3" fill="#c8c8c8" stroke="#3a3a3a" stroke-width="3.2"/>
<text x="684.7" y="221" font-size="17.6" fill="#999">Hausverbr.</text>
<rect x="786.6" y="205.7" width="60.1" height="18.3" fill="#e5e5fa" stroke="#d9d9ec" stroke-width="2.2"/>
<text x="855.9" y="221" font-size="17.6" fill="#999">LP ges.</text>
<rect x="931.5" y="206.1" width="59.3" height="17.5" fill="#f8dada" stroke="#f2a2a2" stroke-width="3"/>
<text x="999.4" y="221" font-size="17.6" fill="#999">openWB EVU-Kit</text>
<rect x="1153.8" y="206.1" width="59.3" height="17.5" fill="#f8dada" stroke="#f2a2a2" stroke-width="3"/>
<text x="1222.9" y="221" font-size="17.6" fill="#999">Shelly Zähler</text>
<rect x="1341.5" y="206.1" width="59.3" height="17.5" fill="#5050f5" stroke="#2f2fe0" stroke-width="3"/>
<text x="1411" y="221" font-size="17.6" fill="#999">LP1</text>
<rect x="1457.5" y="206.1" width="59.3" height="17.5" fill="#5050f5" stroke="#2f2fe0" stroke-width="3"/>
<text x="1527" y="221" font-size="17.6" fill="#999">LP2</text>
</svg>
<svg class="a" style="left:0;top:0" width="1914" height="1038" viewBox="0 0 1914 1038">
<defs><filter id="sh2" x="-20%" y="-20%" width="140%" height="140%"><feDropShadow dx="0" dy="2" stdDeviation="1.5" flood-color="#000" flood-opacity="0.3"/></filter></defs>
<g filter="url(#sh2)">
<path d="M283.5,99.8 C318.7,98.7 425.8,94.6 494.7,93 C563.6,91.4 631.4,89.9 696.9,90.1 C762.4,90.3 830,91.9 888,94 C946,96.1 997.8,99.4 1044.8,102.6 C1091.8,105.8 1128.2,108.7 1170,113 C1211.8,117.3 1258.8,122.9 1295.6,128.6 C1332.4,134.3 1358.2,140 1391,147 C1423.8,154 1458.6,161 1492.3,170.6 C1526,180.2 1562.5,192.5 1593.4,204.3 C1624.3,216.1 1652.4,227.9 1677.7,241.4 C1703,254.9 1725.3,269 1745.2,285.2 C1765.1,301.4 1782.5,318.5 1797,338.5 C1811.5,358.5 1825.2,389.6 1832.5,405 C1839.8,420.4 1839.6,426.7 1841,431" fill="none" stroke="#ea4ef2" stroke-width="3.2" stroke-dasharray="13,10" stroke-dashoffset="1.3"/>
<polygon points="1844,451.5 1835.8,439.6 1842.6,436.8 1850,438.6" fill="#ea4ef2"/>
<ellipse cx="171.5" cy="104.7" rx="105.6" ry="42.3" transform="rotate(-1.5 171.5 104.2)" fill="none" stroke="#ea4ef2" stroke-width="9.5"/>
<ellipse cx="1241.2" cy="207" rx="104.8" ry="41.7" fill="none" stroke="#3b8a57" stroke-width="3.2"/>
<line x1="1149.2" y1="227.1" x2="429.3" y2="436.3" stroke="#3b8a57" stroke-width="3.3"/><polygon points="418.5,439.4 431.8,427.7 436,442.1" fill="#3b8a57"/>
<line x1="1158.3" y1="237.2" x2="1086" y2="402.9" stroke="#3b8a57" stroke-width="3.3"/><polygon points="1081.5,413.2 1081.5,395.7 1094.3,401.3" fill="#3b8a57"/>
<line x1="1320.5" y1="240.5" x2="1518.4" y2="440.7" stroke="#3b8a57" stroke-width="3.3"/><polygon points="1526.3,448.7 1510.1,442.2 1520,432.4" fill="#3b8a57"/>
<line x1="576.2" y1="449.4" x2="576.2" y2="479.8" stroke="#3b8a57" stroke-width="3.8"/>
<polygon points="576.2,439.4 568.7,454.4 583.7,454.4" fill="#3b8a57"/>
<polygon points="576.2,489.8 568.7,474.8 583.7,474.8" fill="#3b8a57"/>
<line x1="576.2" y1="508" x2="576.2" y2="538.4" stroke="#3b8a57" stroke-width="3.8"/>
<polygon points="576.2,498 568.7,513 583.7,513" fill="#3b8a57"/>
<polygon points="576.2,548.4 568.7,533.4 583.7,533.4" fill="#3b8a57"/>
<line x1="216.1" y1="553.7" x2="261.3" y2="512.8" stroke="#e8452c" stroke-width="3.6"/><polygon points="270.1,504.8 262.9,522.1 252.1,510.3" fill="#e8452c"/>
<line x1="390" y1="572.6" x2="400" y2="550.7" stroke="#ea4a35" stroke-width="3.6"/><polygon points="404.6,540.5 404.8,558.2 391.1,552" fill="#ea4a35"/>
</g>
<text x="1175.9" y="194.1" font-size="19.6" font-weight="bold" fill="#3b8a57" textLength="130.4" lengthAdjust="spacingAndGlyphs">Wärmepumpe</text>
<text x="309.5" y="487.1" font-size="19.2" font-weight="bold" fill="#e8452c" textLength="97.9" lengthAdjust="spacingAndGlyphs">Netzbezug</text>
<text x="137.4" y="575.7" font-size="19.4" font-weight="bold" fill="#e8452c" textLength="117.1" lengthAdjust="spacingAndGlyphs">Einspeisung</text>
<text x="396.8" y="593.4" font-size="19.8" font-weight="bold" fill="#ee6555" text-anchor="middle">PV-Leistung</text>
<text x="396.8" y="617.2" font-size="19.8" font-weight="bold" fill="#ee6555" text-anchor="middle">abzüglich kW für</text>
<text x="396.8" y="640.1" font-size="19.8" font-weight="bold" fill="#ee6555" text-anchor="middle">Speicher-Beladung</text>
</svg>
</body></html>
